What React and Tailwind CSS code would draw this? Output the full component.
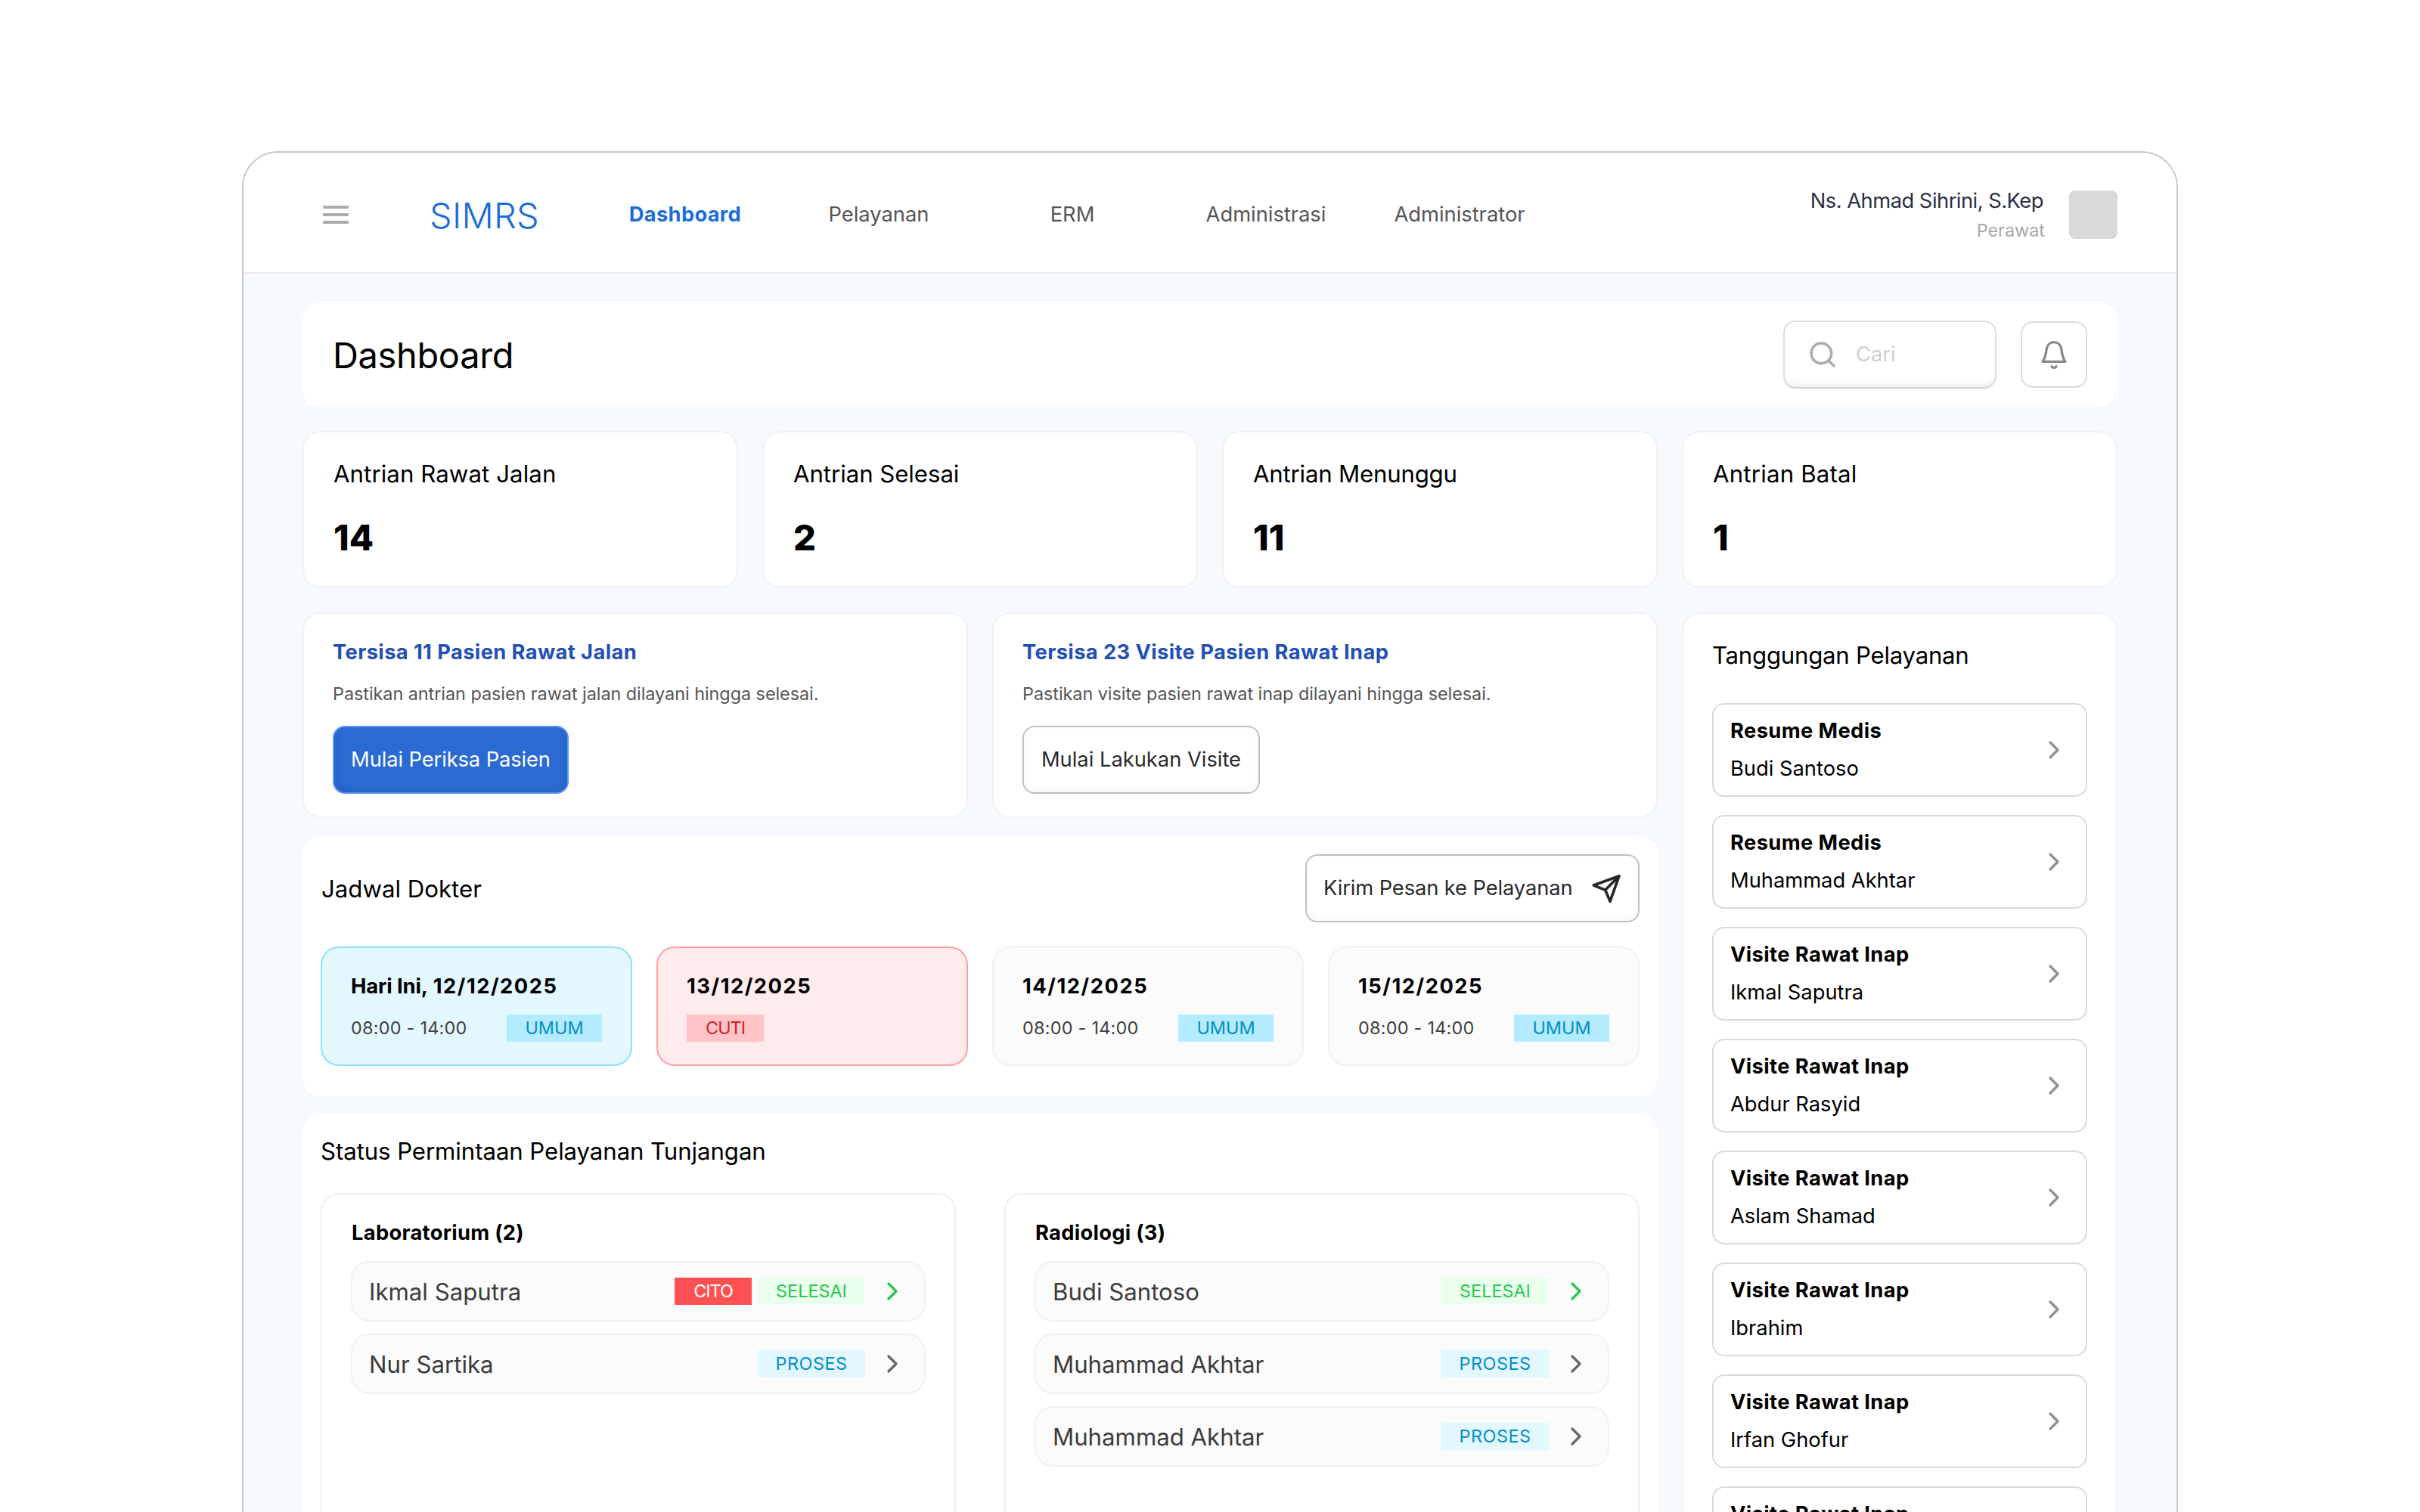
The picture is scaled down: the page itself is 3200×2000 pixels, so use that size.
import React from 'react';
import { ChevronRight, Search } from 'lucide-react';
import clsx from 'clsx';

const MENU = ['Dashboard', 'Pelayanan', 'ERM', 'Administrasi', 'Administrator'];

const STATS = [
  { label: 'Antrian Rawat Jalan', value: 14, labelClass: 'tracking-[0.08px]' },
  { label: 'Antrian Selesai', value: 2, labelClass: 'tracking-[-0.05px]' },
  { label: 'Antrian Menunggu', value: 11, labelClass: 'tracking-[-0.2px]' },
  { label: 'Antrian Batal', value: 1, labelClass: 'tracking-[0.2px]' },
];

const JADWAL = [
  { tanggal: '12/12/2025', jam: '08:00 - 14:00', status: 'UMUM', today: true },
  { tanggal: '13/12/2025', status: 'CUTI' },
  { tanggal: '14/12/2025', jam: '08:00 - 14:00', status: 'UMUM' },
  { tanggal: '15/12/2025', jam: '08:00 - 14:00', status: 'UMUM' },
];

const LABORATORIUM = [
  { nama: 'Ikmal Saputra', status: 'SELESAI', cito: true },
  { nama: 'Nur Sartika', status: 'PROSES' },
];

const RADIOLOGI = [
  { nama: 'Budi Santoso', status: 'SELESAI' },
  { nama: 'Muhammad Akhtar', status: 'PROSES' },
  { nama: 'Muhammad Akhtar', status: 'PROSES' },
];

const TANGGUNGAN = [
  { jenis: 'Resume Medis', nama: 'Budi Santoso' },
  { jenis: 'Resume Medis', nama: 'Muhammad Akhtar' },
  { jenis: 'Visite Rawat Inap', nama: 'Ikmal Saputra' },
  { jenis: 'Visite Rawat Inap', nama: 'Abdur Rasyid' },
  { jenis: 'Visite Rawat Inap', nama: 'Aslam Shamad' },
  { jenis: 'Visite Rawat Inap', nama: 'Ibrahim' },
  { jenis: 'Visite Rawat Inap', nama: 'Irfan Ghofur' },
  { jenis: 'Visite Rawat Inap', nama: 'Nur Sartika' },
];

// --- Icons ---
const BellIcon = () => (
  <svg width="40" height="40" viewBox="0 0 40 40" fill="none" stroke="#8a8a8a" strokeWidth="3.3" strokeLinecap="round" strokeLinejoin="round">
    <path d="M5 29.3C8 25.5 9.3 21 10.2 12.5C11 7.5 14.6 3.7 20 3.7S29 7.5 29.8 12.5C30.7 21 32 25.5 35 29.3Z" />
    <path d="M17 35.7c1.2 2.3 4.8 2.3 6 0" />
  </svg>
);

const SendIcon = () => (
  <svg width="40" height="40" viewBox="0 0 40 40" fill="none" stroke="#262626" strokeWidth="3.6" strokeLinecap="round" strokeLinejoin="round">
    <path d="M37 3.7L3.3 16L18.7 22.3L25 37.3ZM37 3.7L18.7 22.3" />
  </svg>
);

const BADGE_STYLES = {
  UMUM: 'w-[126px] bg-[#b5ebff] text-[#0090c8]',
  CUTI: 'w-[102px] bg-[#ffc4c7] text-[#d02428] tracking-[-1px]',
  CITO: 'w-[102px] bg-[#ff5154] text-white tracking-[-1px]',
  SELESAI: 'w-[142px] bg-[#ebffef] text-[#29c84c]',
  PROSES: 'w-[142px] bg-[#e3f7ff] text-[#0090c8] tracking-[0.5px]',
};

const Badge = ({ type }) => (
  <span className={clsx('flex h-9 items-center justify-center text-[23.4px] leading-9', BADGE_STYLES[type])}>{type}</span>
);

const Header = () => (
  <header className="flex h-[160px] items-center border-b-2 border-[#e9e9e9] bg-white pt-[6px] pr-[78px] pl-[105px]">
    <button className="flex w-[34px] flex-col gap-[6px]">
      <span className="h-1 rounded-[1px] bg-[#ababab]" />
      <span className="h-1 rounded-[1px] bg-[#ababab]" />
      <span className="h-1 rounded-[1px] bg-[#ababab]" />
    </button>
    <div className="ml-[107px] w-[210px] pt-[2px] text-[46.9px] leading-[60px] font-[350] tracking-[0.3px] text-[#1a6cd6]">SIMRS</div>
    <nav className="grid w-[1280px] grid-cols-5 text-center text-[27.3px] leading-10">
      {MENU.map((m) => (
        <a key={m} className={m === 'Dashboard' ? 'font-bold tracking-[0.3px] text-[#1c6dd9]' : 'text-[#555555]'}>{m}</a>
      ))}
    </nav>
    <div className="ml-auto flex items-center gap-8">
      <div className="text-right">
        <div className="pr-[2px] text-[27.3px] leading-10 tracking-[-0.5px] text-[#2b3048]">Ns. Ahmad Sihrini, S.Kep</div>
        <div className="pt-px text-[23.4px] leading-9 text-[#a8a8a8]">Perawat</div>
      </div>
      <div className="size-16 rounded-lg bg-[#d9d9d9]" />
    </div>
  </header>
);

const TitleBar = () => (
  <div className="flex h-[138px] items-center justify-between rounded-3xl bg-white px-10">
    <h1 className="pt-[2px] text-[46.9px] leading-[60px] tracking-[-0.3px]">Dashboard</h1>
    <div className="flex items-center gap-8">
      <div className="flex h-[90px] w-[282px] items-center gap-6 rounded-2xl border-2 border-[#dcdcdc] border-b-[#d2d2d2] pl-[30px] shadow-[inset_0_-12px_8px_-8px_rgba(0,0,0,0.07)]">
        <Search size={40} strokeWidth={2.1} color="#ababab" className="shrink-0" />
        <span className="text-[27.3px] leading-10 text-[#cfcfcf]">Cari</span>
      </div>
      <button className="flex size-[88px] items-center justify-center rounded-2xl border-2 border-[#dcdcdc]">
        <BellIcon />
      </button>
    </div>
  </div>
);

const StatCard = ({ label, value, labelClass }) => (
  <div className="flex h-[208px] flex-col gap-[34px] rounded-3xl border-2 border-[#f1f1f1] bg-white pt-[35px] pr-[38px] pl-[39px]">
    <div className={clsx('text-[31.2px] leading-10', labelClass)}>{label}</div>
    <div className="text-[46.9px] leading-[60px] font-extrabold">{value}</div>
  </div>
);

const TaskCard = ({ title, desc, action, primary }) => (
  <div className="flex h-[272px] flex-col items-start rounded-3xl border-2 border-[#f1f1f1] bg-white px-[38px] pt-[31px]">
    <div className="text-[27.3px] leading-10 font-bold tracking-[0.4px] text-[#2350b4]">{title}</div>
    <div className="mt-[17px] text-[23.4px] leading-9 tracking-[-0.04px] text-[#555555]">{desc}</div>
    <button
      className={clsx(
        'mt-6 flex h-[90px] items-center justify-center rounded-2xl border-2 text-[27.3px] leading-10',
        primary
          ? 'w-[312px] border-[#5b95f2] bg-[#2b6ad2] tracking-[-0.1px] text-white shadow-[inset_0_-4px_12px_rgba(0,0,0,0.06)]'
          : 'w-[314px] border-[#c0c0c0] bg-white text-[#2a2a2a] shadow-[inset_0_-4px_12px_rgba(0,0,0,0.03)]'
      )}
    >
      {action}
    </button>
  </div>
);

const JadwalCard = ({ tanggal, jam, status, today }) => (
  <div
    className={clsx(
      'flex h-[158px] flex-col gap-[17px] rounded-3xl border-2 px-[38px] pt-[31px]',
      today && 'border-[#8be0ff] bg-[#e3f7ff]',
      status === 'CUTI' && 'border-[#ff9fa4] bg-[#ffebeb]',
      !today && status !== 'CUTI' && 'border-[#f1f1f1] bg-[#fbfbfb]'
    )}
  >
    <div className="flex gap-[7px] text-[27.3px] leading-10 font-bold">
      {today && <span className="tracking-[-0.1px]">Hari Ini,</span>}
      <span className="tracking-[1.55px]">{tanggal}</span>
    </div>
    <div className="flex items-center justify-between">
      {jam && <span className="text-[23.4px] leading-9 tracking-[0.25px] text-[#404040]">{jam}</span>}
      <Badge type={status} />
    </div>
  </div>
);

const PermintaanPanel = ({ title, items }) => (
  <div className="flex h-[560px] flex-col rounded-3xl border-2 border-[#f1f1f1] px-[38px] pt-[31px]">
    <div className="pl-px text-[27.3px] leading-10 font-bold tracking-[0.3px]">{title}</div>
    <div className="mt-[17px] flex flex-col gap-4">
      {items.map((it, i) => (
        <div key={i} className="flex h-20 items-center rounded-3xl border-2 border-[#f1f1f1] bg-[#fbfbfb] px-[22px]">
          <span className="mr-auto pt-[2px] text-[31.2px] leading-10 text-[#3c3c3c]">{it.nama}</span>
          <div className="flex gap-2">
            {it.cito && <Badge type="CITO" />}
            <Badge type={it.status} />
          </div>
          <ChevronRight size={40} color={it.status === 'SELESAI' ? '#29c84c' : '#666666'} className="ml-4" />
        </div>
      ))}
    </div>
  </div>
);

const Tanggungan = () => (
  <aside className="flex flex-col rounded-3xl border-2 border-[#f1f1f1] bg-white px-[38px] pt-[35px]">
    <h2 className="text-[31.2px] leading-10 tracking-[-0.25px]">Tanggungan Pelayanan</h2>
    <div className="mt-[43px] flex flex-col gap-6">
      {TANGGUNGAN.map((t, i) => (
        <div key={i} className="flex h-[124px] items-center justify-between rounded-2xl border-2 border-[#dadada] px-[22px]">
          <div className="flex flex-col gap-[10px] text-[27.3px] leading-10">
            <div className="font-bold tracking-[0.4px]">{t.jenis}</div>
            <div>{t.nama}</div>
          </div>
          <ChevronRight size={40} color="#8f8f8f" />
        </div>
      ))}
    </div>
  </aside>
);

export default function App() {
  return (
    <div className="h-[2000px] w-[3200px] overflow-hidden bg-white pt-[200px] font-['Inter',sans-serif] text-black">
      <div className="mx-auto h-[2200px] w-[2560px] overflow-hidden rounded-[48px] border-2 border-[#c8c8c8] bg-[#f6f9fe]">
        <Header />
        <main className="px-[78px] pt-[38px]">
          <TitleBar />

          <div className="mt-8 grid grid-cols-4 gap-8">
            {STATS.map((s) => <StatCard key={s.label} {...s} />)}
          </div>

          <div className="mt-8 grid grid-cols-[1792px_576px] gap-8">
            <div className="flex flex-col gap-6">
              <div className="grid grid-cols-2 gap-8">
                <TaskCard
                  primary
                  title="Tersisa 11 Pasien Rawat Jalan"
                  desc="Pastikan antrian pasien rawat jalan dilayani hingga selesai."
                  action="Mulai Periksa Pasien"
                />
                <TaskCard
                  title="Tersisa 23 Visite Pasien Rawat Inap"
                  desc="Pastikan visite pasien rawat inap dilayani hingga selesai."
                  action="Mulai Lakukan Visite"
                />
              </div>

              <section className="h-[344px] rounded-3xl bg-white p-6">
                <div className="flex items-center justify-between">
                  <h2 className="pt-[2px] pl-px text-[31.2px] leading-10">Jadwal Dokter</h2>
                  <button className="flex h-[90px] w-[442px] items-center justify-between rounded-2xl border-2 border-[#c0c0c0] px-[22px] text-[27.3px] leading-10 tracking-[-0.1px] text-[#2a2a2a] shadow-[inset_0_-4px_12px_rgba(0,0,0,0.03)]">
                    Kirim Pesan ke Pelayanan
                    <SendIcon />
                  </button>
                </div>
                <div className="mt-8 grid grid-cols-4 gap-8">
                  {JADWAL.map((j) => <JadwalCard key={j.tanggal} {...j} />)}
                </div>
              </section>

              <section className="rounded-3xl bg-white px-6 pt-[29px] pb-6">
                <h2 className="text-[31.2px] leading-10 tracking-[-0.08px]">Status Permintaan Pelayanan Tunjangan</h2>
                <div className="mt-[35px] grid grid-cols-2 gap-16">
                  <PermintaanPanel title="Laboratorium (2)" items={LABORATORIUM} />
                  <PermintaanPanel title="Radiologi (3)" items={RADIOLOGI} />
                </div>
              </section>
            </div>

            <Tanggungan />
          </div>
        </main>
      </div>
    </div>
  );
}
